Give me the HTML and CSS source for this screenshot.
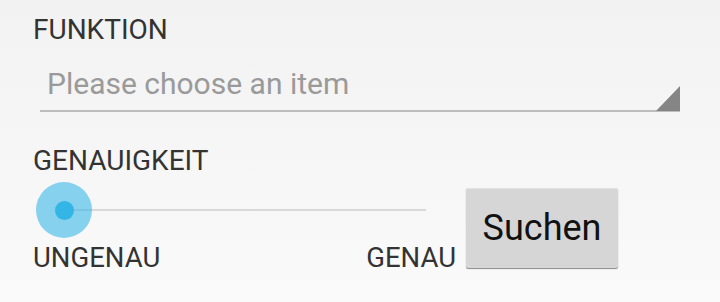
FILE: index.html
```html
<!DOCTYPE html>
<html>
<head>
<meta charset="utf-8">
<link rel="stylesheet" href="styles.css">
</head>
<body>
<div class="page">
  <div class="label label-first">FUNKTION</div>
  <div class="spinner">
    <span class="spinner-text">Please choose an item</span>
  </div>
  <div class="label label-second">GENAUIGKEIT</div>
  <div class="row">
    <div class="slider-col">
      <div class="slider">
        <div class="track"></div>
        <div class="thumb"><div class="thumb-dot"></div></div>
      </div>
      <div class="ends">
        <span class="end">UNGENAU</span>
        <span class="end">GENAU</span>
      </div>
    </div>
    <button class="btn">Suchen</button>
  </div>
</div>
</body>
</html>
```

FILE: styles.css
```css
html, body {
  margin: 0;
  padding: 0;
}
body {
  width: 720px;
  height: 302px;
  overflow: hidden;
  background: linear-gradient(#f2f2f2, #fafafa);
  font-family: Roboto, "Noto Sans", sans-serif;
}
.page {
  padding: 15px 0 0 33px;
}
.label {
  font-size: 28px;
  line-height: 30px;
  color: #333333;
}
.spinner {
  position: relative;
  margin: 21px 0 0 7px;
  width: 640px;
  box-sizing: border-box;
  padding: 0 0 8px 7px;
  border-bottom: 2px solid #bdbdbd;
}
.spinner::after {
  content: "";
  position: absolute;
  right: 0;
  bottom: -1px;
  width: 24px;
  height: 25px;
  background: #858585;
  clip-path: polygon(100% 0, 100% 100%, 0 100%);
}
.spinner-text {
  font-size: 30px;
  line-height: 36px;
  color: #9a9a9a;
  display: block;
}
.label-second {
  margin-top: 34px;
}
.row {
  display: flex;
  align-items: center;
  margin-top: 6px;
}
.slider-col {
  display: flex;
  flex-direction: column;
  width: 423px;
}
.slider {
  position: relative;
  height: 56px;
  margin-left: 3px;
  width: 390px;
}
.track {
  position: absolute;
  left: 28px;
  right: 0;
  top: 27px;
  height: 2px;
  background: #d9d9d9;
}
.thumb {
  position: absolute;
  left: 0;
  top: 0;
  width: 56px;
  height: 56px;
  border-radius: 50%;
  background: rgba(51, 181, 229, 0.58);
  display: flex;
  align-items: center;
  justify-content: center;
}
.thumb-dot {
  width: 19px;
  height: 19px;
  border-radius: 50%;
  background: #33b5e5;
}
.ends {
  display: flex;
  justify-content: space-between;
  font-size: 27.5px;
  line-height: 30px;
  color: #333333;
  margin-top: 5px;
}
.btn {
  margin-left: 10px;
  width: 152px;
  height: 80px;
  border: none;
  border-radius: 2px;
  background: #d6d6d6;
  box-shadow: 0 1px 1px rgba(0, 0, 0, 0.45), inset 0 1px 0 #e2e2e2;
  font-family: Roboto, "Noto Sans", sans-serif;
  font-size: 36px;
  color: #111111;
  padding: 0;
}
```
